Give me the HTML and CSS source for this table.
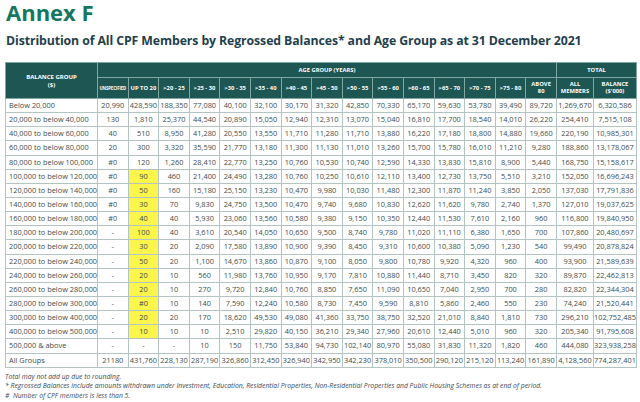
FILE: index.html
```html
<!DOCTYPE html>
<html lang="en">
<head>
<meta charset="utf-8">
<title>Annex F</title>
<link rel="stylesheet" href="styles.css">
</head>
<body>
<div class="page">
  <h1 class="annex">Annex F</h1>
  <h2 class="subtitle">Distribution of All CPF Members by Regrossed Balances* and Age Group as at 31 December 2021</h2>
  <table class="dist">
    <colgroup>
      <col class="c-grp">
      <col span="15" class="c-age">
      <col class="c-mem">
      <col class="c-bal">
    </colgroup>
    <thead>
      <tr class="h1">
        <th rowspan="2" class="grp-h">BALANCE GROUP<br>($)</th>
        <th colspan="15">AGE GROUP (YEARS)</th>
        <th colspan="2">TOTAL</th>
      </tr>
      <tr class="h2">
        <th class="tiny">UNSPECIFIED</th>
        <th>UP TO 20</th>
        <th>&gt;20 - 25</th>
        <th>&gt;25 - 30</th>
        <th>&gt;30 - 35</th>
        <th>&gt;35 - 40</th>
        <th>&gt;40 - 45</th>
        <th>&gt;45 - 50</th>
        <th>&gt;50 - 55</th>
        <th>&gt;55 - 60</th>
        <th>&gt;60 - 65</th>
        <th>&gt;65 - 70</th>
        <th>&gt;70 - 75</th>
        <th>&gt;75 - 80</th>
        <th>ABOVE<br>80</th>
        <th>ALL<br>MEMBERS</th>
        <th>BALANCE<br>($'000)</th>
      </tr>
    </thead>
    <tbody>
      <tr><td>Below 20,000</td><td>20,990</td><td>428,590</td><td>188,350</td><td>77,080</td><td>40,100</td><td>32,100</td><td>30,170</td><td>31,320</td><td>42,850</td><td>70,330</td><td>65,170</td><td>59,630</td><td>53,780</td><td>39,490</td><td>89,720</td><td>1,269,670</td><td>6,320,586</td></tr>
      <tr><td>20,000 to below 40,000</td><td>130</td><td>1,810</td><td>25,370</td><td>44,540</td><td>20,890</td><td>15,050</td><td>12,940</td><td>12,310</td><td>13,070</td><td>15,040</td><td>16,810</td><td>17,700</td><td>18,540</td><td>14,010</td><td>26,220</td><td>254,410</td><td>7,515,108</td></tr>
      <tr><td>40,000 to below 60,000</td><td>40</td><td>510</td><td>8,950</td><td>41,280</td><td>20,550</td><td>13,550</td><td>11,710</td><td>11,280</td><td>11,710</td><td>13,880</td><td>16,220</td><td>17,180</td><td>18,800</td><td>14,880</td><td>19,660</td><td>220,190</td><td>10,985,301</td></tr>
      <tr><td>60,000 to below 80,000</td><td>20</td><td>300</td><td>3,320</td><td>35,590</td><td>21,770</td><td>13,180</td><td>11,300</td><td>11,130</td><td>11,010</td><td>13,260</td><td>15,700</td><td>15,780</td><td>16,010</td><td>11,210</td><td>9,280</td><td>188,860</td><td>13,178,067</td></tr>
      <tr><td>80,000 to below 100,000</td><td>#0</td><td>120</td><td>1,260</td><td>28,410</td><td>22,770</td><td>13,250</td><td>10,760</td><td>10,530</td><td>10,740</td><td>12,590</td><td>14,330</td><td>13,830</td><td>15,810</td><td>8,900</td><td>5,440</td><td>168,750</td><td>15,158,617</td></tr>
      <tr><td>100,000 to below 120,000</td><td>#0</td><td class="hl">90</td><td>460</td><td>21,400</td><td>24,490</td><td>13,280</td><td>10,760</td><td>10,250</td><td>10,610</td><td>12,110</td><td>13,400</td><td>12,730</td><td>13,750</td><td>5,510</td><td>3,210</td><td>152,050</td><td>16,696,243</td></tr>
      <tr><td>120,000 to below 140,000</td><td>#0</td><td class="hl">50</td><td>160</td><td>15,180</td><td>25,150</td><td>13,230</td><td>10,470</td><td>9,980</td><td>10,030</td><td>11,480</td><td>12,300</td><td>11,870</td><td>11,240</td><td>3,850</td><td>2,050</td><td>137,030</td><td>17,791,836</td></tr>
      <tr><td>140,000 to below 160,000</td><td>#0</td><td class="hl">30</td><td>70</td><td>9,830</td><td>24,750</td><td>13,500</td><td>10,470</td><td>9,740</td><td>9,680</td><td>10,830</td><td>12,620</td><td>11,620</td><td>9,780</td><td>2,740</td><td>1,370</td><td>127,010</td><td>19,037,625</td></tr>
      <tr><td>160,000 to below 180,000</td><td>#0</td><td class="hl">40</td><td>40</td><td>5,930</td><td>23,060</td><td>13,560</td><td>10,580</td><td>9,380</td><td>9,150</td><td>10,350</td><td>12,440</td><td>11,530</td><td>7,610</td><td>2,160</td><td>960</td><td>116,800</td><td>19,840,950</td></tr>
      <tr><td>180,000 to below 200,000</td><td>-</td><td class="hl">100</td><td>40</td><td>3,610</td><td>20,540</td><td>14,050</td><td>10,650</td><td>9,500</td><td>8,740</td><td>9,780</td><td>11,020</td><td>11,110</td><td>6,380</td><td>1,650</td><td>700</td><td>107,860</td><td>20,480,697</td></tr>
      <tr><td>200,000 to below 220,000</td><td>-</td><td class="hl">30</td><td>20</td><td>2,090</td><td>17,580</td><td>13,890</td><td>10,900</td><td>9,390</td><td>8,450</td><td>9,310</td><td>10,600</td><td>10,380</td><td>5,090</td><td>1,230</td><td>540</td><td>99,490</td><td>20,878,824</td></tr>
      <tr><td>220,000 to below 240,000</td><td>-</td><td class="hl">50</td><td>20</td><td>1,100</td><td>14,670</td><td>13,860</td><td>10,870</td><td>9,100</td><td>8,050</td><td>9,800</td><td>10,780</td><td>9,920</td><td>4,320</td><td>960</td><td>400</td><td>93,900</td><td>21,589,639</td></tr>
      <tr><td>240,000 to below 260,000</td><td>-</td><td class="hl">20</td><td>10</td><td>560</td><td>11,980</td><td>13,760</td><td>10,950</td><td>9,170</td><td>7,810</td><td>10,880</td><td>11,440</td><td>8,710</td><td>3,450</td><td>820</td><td>320</td><td>89,870</td><td>22,462,813</td></tr>
      <tr><td>260,000 to below 280,000</td><td>-</td><td class="hl">20</td><td>10</td><td>270</td><td>9,720</td><td>12,840</td><td>10,760</td><td>8,850</td><td>7,650</td><td>11,090</td><td>10,650</td><td>7,040</td><td>2,950</td><td>700</td><td>280</td><td>82,820</td><td>22,344,304</td></tr>
      <tr><td>280,000 to below 300,000</td><td>-</td><td class="hl">#0</td><td>10</td><td>140</td><td>7,590</td><td>12,240</td><td>10,580</td><td>8,730</td><td>7,450</td><td>9,590</td><td>8,810</td><td>5,860</td><td>2,460</td><td>550</td><td>230</td><td>74,240</td><td>21,520,441</td></tr>
      <tr><td>300,000 to below 400,000</td><td>-</td><td class="hl">20</td><td>20</td><td>170</td><td>18,620</td><td>49,530</td><td>49,080</td><td>41,360</td><td>33,750</td><td>38,750</td><td>32,520</td><td>21,010</td><td>8,840</td><td>1,810</td><td>730</td><td>296,210</td><td>102,752,485</td></tr>
      <tr><td>400,000 to below 500,000</td><td>-</td><td class="hl">10</td><td>10</td><td>10</td><td>2,510</td><td>29,820</td><td>40,150</td><td>36,210</td><td>29,340</td><td>27,960</td><td>20,610</td><td>12,440</td><td>5,010</td><td>960</td><td>320</td><td>205,340</td><td>91,795,608</td></tr>
      <tr><td>500,000 &amp; above</td><td>-</td><td>-</td><td>-</td><td>10</td><td>150</td><td>11,750</td><td>53,840</td><td>94,730</td><td>102,140</td><td>80,970</td><td>55,080</td><td>31,830</td><td>11,320</td><td>1,820</td><td>460</td><td>444,080</td><td>323,938,258</td></tr>
      <tr><td>All Groups</td><td>21180</td><td>431,760</td><td>228,130</td><td>287,190</td><td>326,860</td><td>312,450</td><td>326,940</td><td>342,950</td><td>342,230</td><td>378,010</td><td>350,500</td><td>290,120</td><td>215,120</td><td>113,240</td><td>161,890</td><td>4,128,560</td><td>774,287,401</td></tr>
    </tbody>
  </table>
  <div class="notes">
    <p>Total may not add up due to rounding.</p>
    <p>* Regrossed Balances include amounts withdrawn under Investment, Education, Residential Properties, Non-Residential Properties and Public Housing Schemes as at end of period.</p>
    <p>#&nbsp; Number of CPF members is less than 5.</p>
  </div>
</div>
</body>
</html>
```

FILE: styles.css
```css
html, body {
  margin: 0;
  padding: 0;
  background: #ffffff;
}

.page {
  padding: 0 4px 0 5px;
  font-family: "Open Sans", "Noto Sans", sans-serif;
}

.annex {
  margin: 0 0 0 1px;
  font-size: 22px;
  line-height: 24px;
  font-weight: 700;
  color: #13785f;
}

.subtitle {
  margin: 9px 0 0 1px;
  font-size: 12.3px;
  line-height: 16px;
  font-weight: 700;
  color: #1f3f4d;
  letter-spacing: -0.1px;
  white-space: nowrap;
}

.dist {
  margin-top: 13px;
  width: 631px;
  table-layout: fixed;
  border-collapse: collapse;
  border: 1px solid #9db3b1;
}

.c-grp { width: 92px; }
.c-age { width: 30.6px; }
.c-mem { width: 37px; }
.c-bal { width: 43px; }

.dist th {
  background: #1d5653;
  color: #ffffff;
  font-weight: 700;
  font-size: 5.8px;
  line-height: 7px;
  text-align: center;
  border: 1px solid #7fa6a1;
  padding: 0;
  white-space: nowrap;
}

.dist .h1 { height: 15px; }
.dist .h2 { height: 21px; }
.dist th.tiny { font-size: 4.3px; letter-spacing: -0.1px; }
.dist th.grp-h { font-size: 6px; line-height: 8px; }

.dist tbody tr {
  height: 14.15px;
}

.dist td {
  padding: 0;
  font-size: 7.4px;
  line-height: 9px;
  color: #3e4c4c;
  text-align: center;
  border: 1px solid #b4c4c3;
  white-space: nowrap;
}

.dist td:first-child {
  text-align: left;
  padding-left: 3px;
}

.dist td.hl {
  background: #fcf54c;
}

.notes {
  margin-top: 4px;
}

.notes p {
  margin: 0;
  font-size: 6.8px;
  line-height: 9.5px;
  font-style: italic;
  color: #3c4a55;
}
```
